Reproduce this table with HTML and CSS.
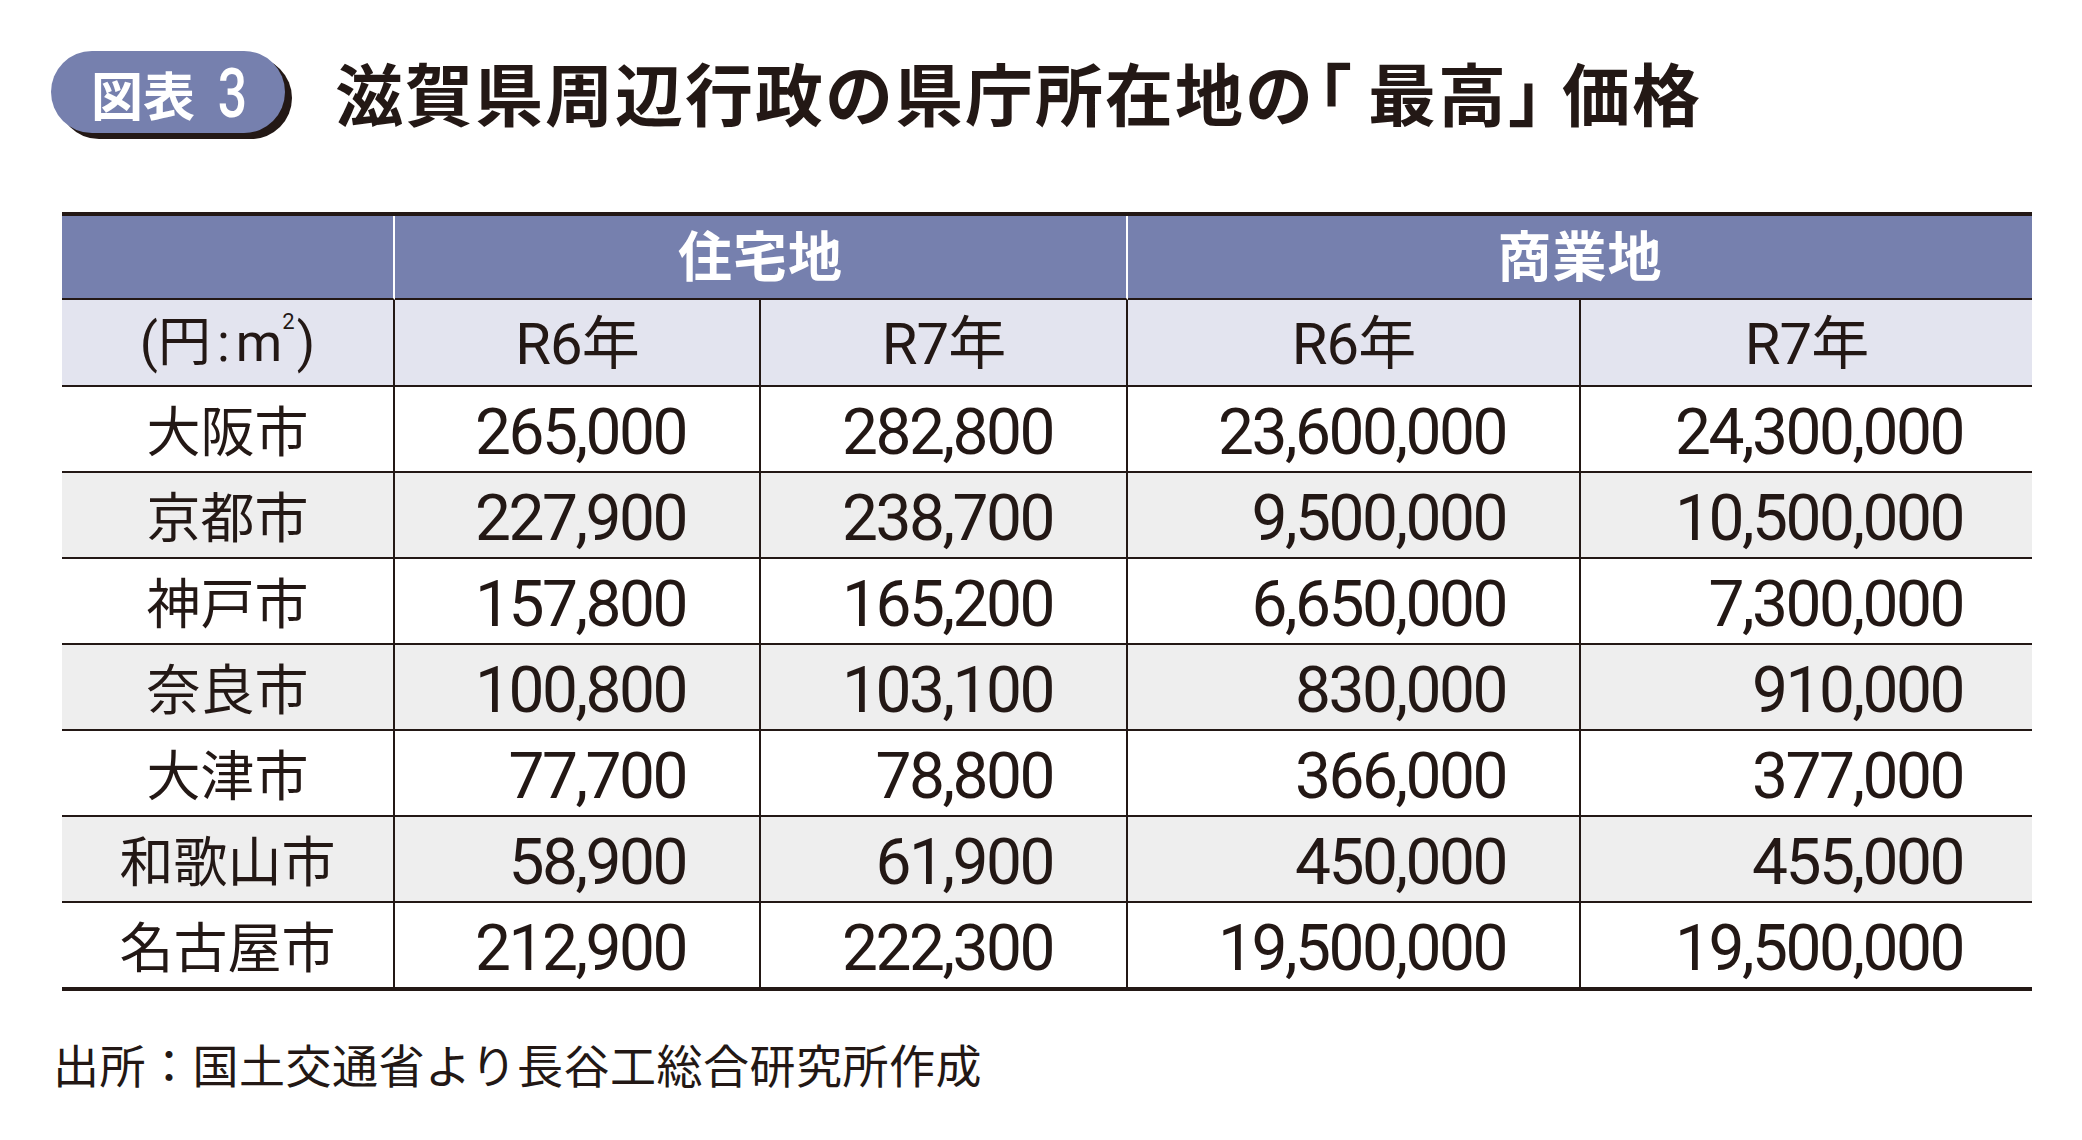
FILE: index.html
```html
<!DOCTYPE html>
<html lang="ja">
<head>
<meta charset="utf-8">
<title>図表3 滋賀県周辺行政の県庁所在地の「最高」価格</title>
<link rel="stylesheet" href="styles.css">
</head>
<body>
<div class="page">
  <header class="fig-head">
    <div class="badge"><span class="badge-jp">図表</span><span class="badge-num">3</span></div>
    <h1 class="title">滋賀県周辺行政の県庁所在地の<span class="br-open">「</span>最高<span class="br-close">」</span>価格</h1>
  </header>

  <div class="grid">
    <div class="cell h1 c0"></div>
    <div class="cell h1 span2 c1">住宅地</div>
    <div class="cell h1 span2 last">商業地</div>

    <div class="cell h2 c0 unit">(円<span class="colon">:</span>m<sup>2</sup>)</div>
    <div class="cell h2">R6年</div>
    <div class="cell h2">R7年</div>
    <div class="cell h2">R6年</div>
    <div class="cell h2 last">R7年</div>

    <div class="cell row odd name">大阪市</div>
    <div class="cell row odd num">265,000</div>
    <div class="cell row odd num">282,800</div>
    <div class="cell row odd num">23,600,000</div>
    <div class="cell row odd num last">24,300,000</div>

    <div class="cell row even name">京都市</div>
    <div class="cell row even num">227,900</div>
    <div class="cell row even num">238,700</div>
    <div class="cell row even num">9,500,000</div>
    <div class="cell row even num last">10,500,000</div>

    <div class="cell row odd name">神戸市</div>
    <div class="cell row odd num">157,800</div>
    <div class="cell row odd num">165,200</div>
    <div class="cell row odd num">6,650,000</div>
    <div class="cell row odd num last">7,300,000</div>

    <div class="cell row even name">奈良市</div>
    <div class="cell row even num">100,800</div>
    <div class="cell row even num">103,100</div>
    <div class="cell row even num">830,000</div>
    <div class="cell row even num last">910,000</div>

    <div class="cell row odd name">大津市</div>
    <div class="cell row odd num">77,700</div>
    <div class="cell row odd num">78,800</div>
    <div class="cell row odd num">366,000</div>
    <div class="cell row odd num last">377,000</div>

    <div class="cell row even name">和歌山市</div>
    <div class="cell row even num">58,900</div>
    <div class="cell row even num">61,900</div>
    <div class="cell row even num">450,000</div>
    <div class="cell row even num last">455,000</div>

    <div class="cell row odd name end">名古屋市</div>
    <div class="cell row odd num end">212,900</div>
    <div class="cell row odd num end">222,300</div>
    <div class="cell row odd num end">19,500,000</div>
    <div class="cell row odd num end last">19,500,000</div>
  </div>

  <p class="source">出所：国土交通省より長谷工総合研究所作成</p>
</div>
</body>
</html>
```

FILE: styles.css
```css
html, body {
  margin: 0;
  padding: 0;
  background: #ffffff;
}

body {
  color: #231815;
  font-family: "Noto Sans CJK JP", "Noto Sans", sans-serif;
}

.page {
  width: 2082px;
  height: 1140px;
  overflow: hidden;
}

/* ---------- heading ---------- */
.fig-head {
  display: flex;
  align-items: center;
  padding: 51px 0 0 51px;
}

.badge {
  box-sizing: border-box;
  width: 234px;
  height: 82px;
  border-radius: 41px;
  background: #7680ae;
  box-shadow: 7px 6px 0 #231815;
  color: #ffffff;
  display: flex;
  align-items: center;
  padding: 4px 0 0 40px;
}

.badge-jp {
  font-family: "Noto Sans CJK JP", sans-serif;
  font-weight: 700;
  font-size: 52px;
  line-height: 1;
}

.badge-num {
  display: inline-block;
  font-family: Roboto, "Liberation Sans", sans-serif;
  font-weight: 500;
  font-size: 68px;
  line-height: 1;
  margin-left: 18px;
  transform: scaleX(0.76);
}

.title {
  margin: 0 0 0 50px;
  font-family: "Noto Sans CJK JP", sans-serif;
  font-weight: 700;
  font-size: 68px;
  line-height: 1;
  letter-spacing: 2px;
  color: #231815;
}

.br-open,
.br-close {
  font-feature-settings: "halt" 1;
}

.br-open {
  margin-left: 3px;
  margin-right: 14px;
}

.br-close {
  margin-right: 18px;
}

/* ---------- table ---------- */
.grid {
  display: grid;
  grid-template-columns: 333px 366px 367px 453px 451px;
  margin: 79px 0 0 62px;
  width: 1970px;
  border-top: 4px solid #231815;
  border-bottom: 4px solid #231815;
}

.cell {
  box-sizing: border-box;
  display: flex;
  align-items: center;
  justify-content: center;
  border-right: 2px solid #231815;
  border-bottom: 2px solid #231815;
  white-space: nowrap;
}

.cell.last {
  border-right: none;
}

.span2 {
  grid-column: span 2;
}

.h1 {
  height: 84px;
  background: #7680ae;
  border-right-color: #ffffff;
  color: #ffffff;
  font-weight: 700;
  font-size: 54px;
  letter-spacing: 1px;
  line-height: 1;
  padding-bottom: 6px;
}

.h2 {
  height: 87px;
  background: #e3e4ef;
  font-family: Roboto, "Noto Sans CJK JP", sans-serif;
  font-size: 58px;
  line-height: 1;
  letter-spacing: -1px;
  padding-top: 2px;
}

.unit {
  font-size: 53px;
  letter-spacing: 0;
}

.unit .colon {
  margin: 0 6px;
}

.unit sup {
  font-size: 22px;
  vertical-align: 0;
  position: relative;
  top: -22px;
  margin-left: 0;
  margin-right: 2px;
}

.row {
  height: 86px;
  line-height: 1;
}

.row.end {
  height: 84px;
  border-bottom: none;
}

.odd {
  background: #ffffff;
}

.even {
  background: #eeeeee;
}

.name {
  font-family: "Noto Sans CJK JP", sans-serif;
  font-size: 54px;
  font-weight: 400;
}

.num {
  justify-content: flex-end;
  padding-right: 73px;
  padding-top: 8px;
  font-family: Roboto, "Liberation Sans", sans-serif;
  font-size: 64px;
  font-weight: 400;
  letter-spacing: -2.5px;
}

.num.last {
  padding-right: 69px;
}

/* ---------- source ---------- */
.source {
  margin: 49px 0 0 53px;
  font-family: "Noto Sans CJK JP", sans-serif;
  font-size: 46px;
  line-height: 1;
  letter-spacing: 0.5px;
  color: #231815;
}
```
